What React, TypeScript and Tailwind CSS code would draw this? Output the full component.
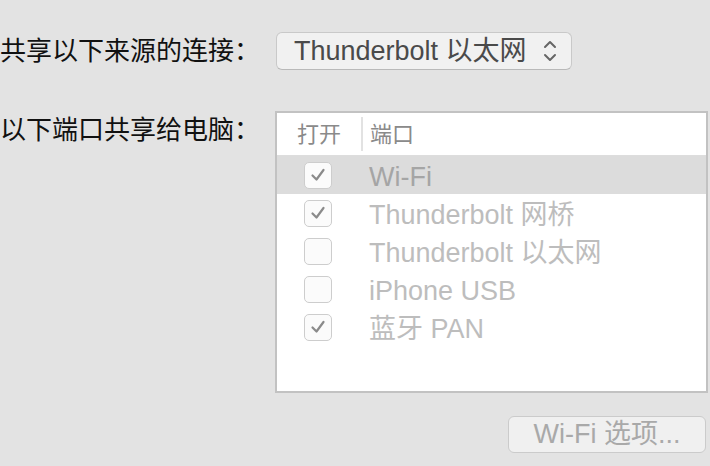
const ports = [
  { name: "Wi-Fi", on: true, selected: true },
  { name: "Thunderbolt 网桥", on: true, selected: false },
  { name: "Thunderbolt 以太网", on: false, selected: false },
  { name: "iPhone USB", on: false, selected: false },
  { name: "蓝牙 PAN", on: true, selected: false },
];

function Check({ on }: { on: boolean }) {
  return (
    <div className="w-[28px] h-[27px] rounded-[5px] border border-[#cdcdcd] bg-[#fbfbfb] flex items-center justify-center shrink-0">
      {on && (
        <svg width="16" height="14" viewBox="0 0 16 14" fill="none">
          <path d="M2.5 7.5 L6.5 11.5 L13.5 2" stroke="#8a8a8a" strokeWidth="2.2" strokeLinecap="round" strokeLinejoin="round" />
        </svg>
      )}
    </div>
  );
}

export default function App() {
  return (
    <div
      className="w-[710px] h-[466px] bg-[#e3e3e3] overflow-hidden flex flex-col"
      style={{ fontFamily: '"Liberation Sans", "Noto Sans CJK SC", sans-serif' }}
    >
      {/* source connection */}
      <div className="flex items-center mt-[32px] h-[38px]">
        <div className="w-[276px] text-[26px] leading-[30px] text-[#111] whitespace-nowrap">共享以下来源的连接：</div>
        <div className="w-[296px] h-[38px] rounded-[6px] bg-[#f1f1f1] border border-[#c9c9c9] border-b-[#b9b9b9] flex items-center pl-[17px] pr-[14px]">
          <span className="flex-1 text-[27px] leading-none text-[#4a4a4a] whitespace-nowrap">Thunderbolt 以太网</span>
          <svg width="14" height="24" viewBox="0 0 14 24" fill="none">
            <path d="M2 8 L7 3 L12 8" stroke="#666" strokeWidth="2" strokeLinecap="round" strokeLinejoin="round" />
            <path d="M2 16 L7 21 L12 16" stroke="#666" strokeWidth="2" strokeLinecap="round" strokeLinejoin="round" />
          </svg>
        </div>
      </div>

      {/* ports table */}
      <div className="flex mt-[41px]">
        <div className="w-[275px] pt-[4px] text-[26px] leading-[30px] text-[#111] whitespace-nowrap">以下端口共享给电脑：</div>
        <div className="w-[433px] h-[282px] border-2 border-[#c2c2c2] bg-white flex flex-col">
          <div className="h-[43px] flex items-center border-b border-[#dddddd] text-[22px] text-[#8a8a8a]">
            <div className="w-[84px] pl-[20px]">打开</div>
            <div className="w-[2px] h-[34px] bg-[#e2e2e2]" />
            <div className="pl-[7px]">端口</div>
          </div>
          {ports.map((p) => (
            <div key={p.name} className={`h-[38px] flex items-center ${p.selected ? "bg-[#dcdcdc]" : ""}`}>
              <div className="w-[92px] pl-[27px]">
                <Check on={p.on} />
              </div>
              <span className={`mt-[5px] text-[27px] leading-none whitespace-nowrap ${p.selected ? "text-[#a5a5a5]" : "text-[#bdbdbd]"}`}>
                {p.name}
              </span>
            </div>
          ))}
        </div>
      </div>

      {/* wifi options */}
      <div className="flex justify-end mt-[23px] pr-[4px]">
        <div className="w-[198px] h-[37px] rounded-[6px] bg-[#f0f0f0] border border-[#cbcbcb] flex items-center justify-center text-[27px] leading-none text-[#a9a9a9] whitespace-nowrap">
          Wi-Fi 选项...
        </div>
      </div>
    </div>
  );
}
